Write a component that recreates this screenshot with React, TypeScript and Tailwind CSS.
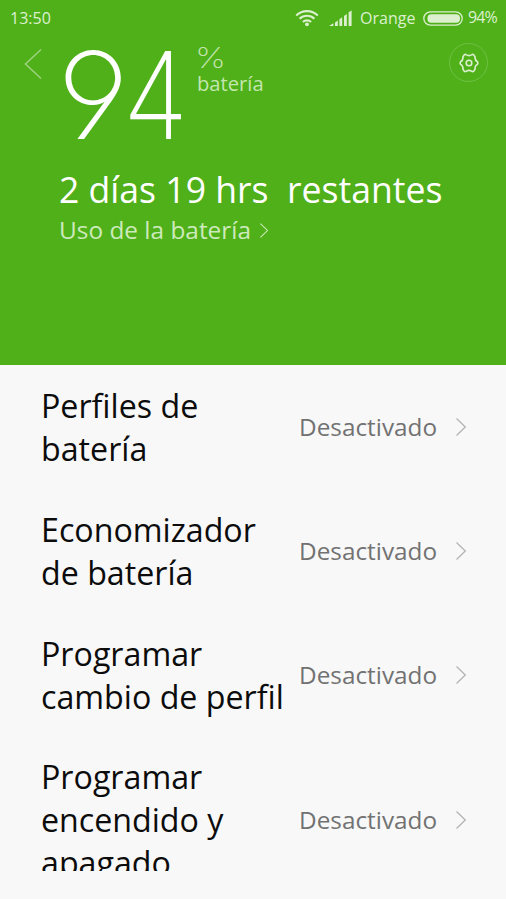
import React from 'react';

interface SettingItem {
  id: string;
  title: string;
  status: string;
}

const items: SettingItem[] = [
  { id: 'profiles', title: 'Perfiles de batería', status: 'Desactivado' },
  { id: 'saver', title: 'Economizador de batería', status: 'Desactivado' },
  { id: 'schedule', title: 'Programar cambio de perfil', status: 'Desactivado' },
  { id: 'power', title: 'Programar encendido y apagado', status: 'Desactivado' },
];

const WifiIcon = () => (
  <svg width="24" height="18" viewBox="0 0 24 18" fill="none" stroke="currentColor" strokeWidth="2.1">
    <path d="M1.2 6.6C7.2 0.6 16.8 0.6 22.8 6.6" />
    <path d="M4.6 9.8C8.7 5.8 15.3 5.8 19.4 9.8" />
    <path d="M7.9 13C10.2 10.8 13.8 10.8 16.1 13" />
    <circle cx="12" cy="15.3" r="1.9" fill="currentColor" stroke="none" />
  </svg>
);

const SignalIcon = () => (
  <svg width="23" height="16" viewBox="0 0 23 16" fill="currentColor">
    <path d="M0 16L4.4 13.2V16z" />
    <path d="M6 12.4L8.8 10.6V16H6z" />
    <path d="M10.4 9.3L13.2 7.3V16H10.4z" />
    <path d="M15 6L17.8 4V16H15z" />
    <path d="M19.6 2.3L22.6 0.4V16H19.6z" />
  </svg>
);

const BatteryIcon = () => (
  <svg width="40" height="15" viewBox="0 0 40 15" fill="none">
    <rect x="0.8" y="0.8" width="38.4" height="13.4" rx="6.7" stroke="currentColor" strokeWidth="1.3" />
    <rect x="4.5" y="3.2" width="32.5" height="8.6" rx="3.8" fill="currentColor" />
  </svg>
);

const GearIcon = () => (
  <svg width="20" height="20" viewBox="0 0 20 20" fill="none" stroke="currentColor" strokeWidth="1.6" strokeLinejoin="round">
    <path d="M5.2 1.8Q6.3 1 7.5 1.9Q10 3.3 12.5 1.9Q13.7 1 14.8 1.8L16.1 3.9Q15.6 7.2 18.4 8.7Q19.3 10 18.4 11.3Q15.600 12.8 16.1 16.1L14.8 18.2Q13.7 19 12.5 18.1Q10 16.7 7.5 18.1Q6.3 19 5.2 18.2L3.900 16.1Q4.4 12.8 1.6 11.3Q0.7 10 1.6 8.7Q4.4 7.2 3.9 3.9Z" />
    <circle cx="10" cy="10" r="2.8" />
  </svg>
);

const Chevron = ({ className }: { className: string }) => (
  <svg className={className} viewBox="0 0 10 18" fill="none" stroke="currentColor" strokeWidth="1.3">
    <path d="M0.5 0.5L9.3 9L0.5 17.5" />
  </svg>
);

const StatusBar = () => (
  <div className="flex h-9 items-center justify-between pl-2.5 pr-[9px] text-base text-[#dcf0d0]">
    <span className="-mt-px">13:50</span>
    <div className="flex items-center">
      <WifiIcon />
      <div className="ml-2.5"><SignalIcon /></div>
      <span className="-mt-px ml-2 w-[55px]">Orange</span>
      <div className="ml-2"><BatteryIcon /></div>
      <span className="-mt-0.5 ml-[5px] w-[29px] whitespace-nowrap tracking-[-0.9px]">94%</span>
    </div>
  </div>
);

const SettingRow = ({ item }: { item: SettingItem }) => (
  <div className="flex shrink-0 items-center justify-between py-[18.8px] pl-[41px] pr-10">
    <span className="w-[250px] text-[32.2px] leading-[43px] text-[#0c0c0c]">{item.title}</span>
    <div className="flex items-center text-[#727272]">
      <span className="text-[24.3px] leading-8">{item.status}</span>
      <Chevron className="ml-[19px] h-[18px] w-2.5 text-[#b4b4b4]" />
    </div>
  </div>
);

export default function App() {
  return (
    <div className="flex h-[899px] w-[506px] flex-col overflow-hidden bg-[#f8f8f8] font-['Open_Sans',sans-serif]">
      <header className="h-[365px] shrink-0 bg-[#50b019]">
        <StatusBar />

        <div className="flex h-[130px] items-start pr-[18px]">
          <svg className="ml-6 mt-3 text-[#9bd27c]" width="18" height="32" viewBox="0 0 18 32" fill="none" stroke="currentColor" strokeWidth="1.6">
            <path d="M17 1.5L1.5 16L17 30.5" />
          </svg>
          <div className="ml-[15px] mt-[3px] flex w-[132px] font-['Inter',sans-serif] text-[121px] font-[240] leading-[112px] text-white [font-feature-settings:'cv04']">
            <span className="w-[66px] origin-left scale-x-[1.05]">9</span>
            <span className="w-[66px] origin-left scale-x-[0.88]">4</span>
          </div>
          <div className="ml-2 mt-[9px] flex flex-col text-[#c3e6af]">
            <span className="-ml-0.5 h-[25px] origin-left scale-x-[1.2] font-['Inter',sans-serif] text-[29px] font-extralight leading-[25px]">%</span>
            <span className="text-[20.2px] leading-[26px]">batería</span>
          </div>
          <button className="ml-auto mt-[7px] flex h-[39px] w-[39px] items-center justify-center rounded-full border border-[#6fc043] text-[#dcf0d0]">
            <GearIcon />
          </button>
        </div>

        <div className="pl-[59px]">
          <p className="whitespace-pre text-[35.6px] leading-[46px] text-white">2 días 19 hrs  restantes</p>
          <div className="flex items-center text-[#cdeabc]">
            <span className="text-[24.4px] leading-[36px]">Uso de la batería</span>
            <Chevron className="ml-[9px] h-[15px] w-2" />
          </div>
        </div>
      </header>

      <main className="flex h-[506px] shrink-0 flex-col overflow-hidden pt-[0.6px]">
        {items.map((item) => (
          <SettingRow key={item.id} item={item} />
        ))}
      </main>
    </div>
  );
}
